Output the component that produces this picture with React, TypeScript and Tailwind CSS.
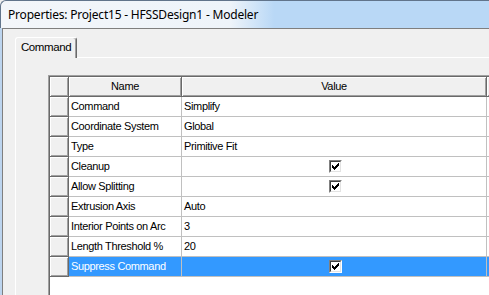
import React from 'react';

type Row = { name: string; value?: string; check?: boolean; selected?: boolean };

const rows: Row[] = [
  { name: 'Command', value: 'Simplify' },
  { name: 'Coordinate System', value: 'Global' },
  { name: 'Type', value: 'Primitive Fit' },
  { name: 'Cleanup', check: true },
  { name: 'Allow Splitting', check: true },
  { name: 'Extrusion Axis', value: 'Auto' },
  { name: 'Interior Points on Arc', value: '3' },
  { name: 'Length Threshold %', value: '20' },
  { name: 'Suppress Command', check: true, selected: true },
];

// classic 7x7 check glyph, one rect per pixel run
const checkRuns: [number, number, number][] = [
  [6, 0, 1],
  [5, 1, 2],
  [0, 2, 1], [4, 2, 3],
  [0, 3, 2], [3, 3, 3],
  [0, 4, 5],
  [1, 5, 3],
  [2, 6, 1],
];

const CheckBox = () => (
  <span className="flex h-[13px] w-[13px] border-l border-t border-[#808080] border-b border-r border-b-white border-r-white">
    <span className="flex h-full w-full items-center justify-center border-l border-t border-[#404040] border-b border-r border-b-[#e3e3e3] border-r-[#e3e3e3] bg-white">
      <svg width="7" height="7" viewBox="0 0 7 7" shapeRendering="crispEdges">
        {checkRuns.map(([x, y, w], i) => (
          <rect key={i} x={x} y={y} width={w} height={1} fill="#000" />
        ))}
      </svg>
    </span>
  </span>
);

const raised =
  'bg-[#f0f0f0] border-r border-b border-[#696969] shadow-[inset_1px_1px_0_#ffffff,inset_-1px_-1px_0_#a0a0a0]';

export default function App() {
  return (
    <div className="relative flex h-[295px] w-[489px] flex-col overflow-hidden bg-[#f0f0f0]">
      {/* title bar */}
      <div className="flex h-[28px] shrink-0 items-center rounded-tl-[6px] border-l border-t border-[#61748b] bg-[linear-gradient(90deg,#f3f6fa_0%,#eef4fa_47%,#b9d8f6_56%,#b9d8f6_100%)] pl-[7px]">
        <span className="font-['Noto_Sans',sans-serif] text-[12px] tracking-[-0.2px] text-black">
          Properties: Project15 - HFSSDesign1 - Modeler
        </span>
      </div>

      <div className="flex min-h-0 flex-1">
        <div className="w-[2px] shrink-0 bg-[#bcd4ee]" />
        <div className="flex min-h-0 flex-1 flex-col border-l border-t border-[#7f7f7f] pl-[12px] pt-[8px]">
          {/* tab strip */}
          <div className="flex">
            <div className="relative z-10 flex h-[21px] w-[62px] items-center justify-center rounded-t-[3px] border-l border-t border-white border-r border-r-[#696969] bg-[#f0f0f0] pb-[1px] font-['Liberation_Sans',Arial,sans-serif] text-[11.5px] tracking-[-0.4px] text-black shadow-[inset_-1px_0_0_#a0a0a0]">
              Command
            </div>
          </div>

          {/* tab page */}
          <div className="-mt-px flex min-h-0 flex-1 flex-col border-l border-t border-white pl-[32px] pt-[17px]">
            <div className="flex min-h-0 flex-1 flex-col overflow-hidden border-l border-t border-[#a0a0a0] bg-white">
              <div className="flex-1 border-l border-t border-[#696969] font-['Liberation_Sans',Arial,sans-serif] text-[11px] tracking-[-0.35px] text-black">
                {/* header */}
                <div className="flex h-[20px] w-max">
                  <div className={`w-[19px] shrink-0 ${raised}`} />
                  <div className={`flex w-[113px] shrink-0 items-center justify-center ${raised}`}>Name</div>
                  <div className={`flex w-[305px] shrink-0 items-center justify-center ${raised}`}>Value</div>
                  <div className={`w-[20px] shrink-0 ${raised}`} />
                </div>

                {rows.map((r) => (
                  <div key={r.name} className="flex h-[20px] w-max">
                    <div className={`w-[19px] shrink-0 ${raised}`} />
                    <div
                      className={`flex w-[113px] shrink-0 items-center border-b border-r border-[#c0c0c0] pl-[2px] ${
                        r.selected ? 'bg-[#3399ff] text-white' : ''
                      }`}
                    >
                      {r.name}
                    </div>
                    <div
                      className={`flex w-[305px] shrink-0 items-center border-b border-r border-[#c0c0c0] pl-[2px] ${
                        r.selected ? 'bg-[#3399ff] text-white' : ''
                      } ${r.check ? 'justify-center pl-0' : ''}`}
                    >
                      {r.check ? <CheckBox /> : r.value}
                    </div>
                    <div
                      className={`w-[20px] shrink-0 border-b border-[#c0c0c0] ${r.selected ? 'bg-[#3399ff]' : ''}`}
                    />
                  </div>
                ))}
              </div>
            </div>
          </div>
        </div>
      </div>
    </div>
  );
}
